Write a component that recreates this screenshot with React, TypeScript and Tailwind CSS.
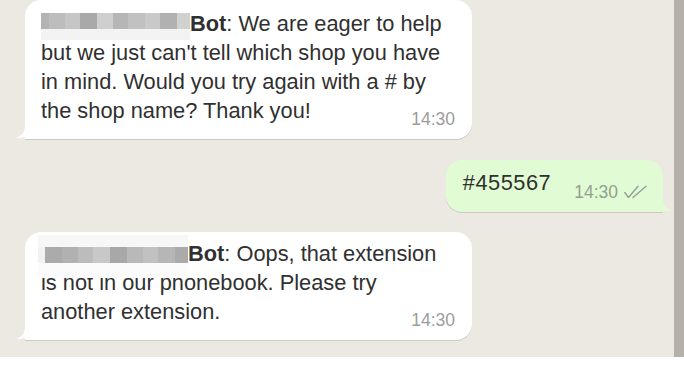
const tone1 = ["#b3b3b3", "#bdbdbd", "#c6c6c6", "#a9a9a9", "#cfcfcf", "#b6b6b6", "#c1c1c1", "#c9c9c9", "#b1b1b1", "#d1d1d1"];
const size1 = [8, 16, 15, 17, 16, 15, 17, 15, 17, 13];
const tone3 = ["#ababab", "#b1b1b1", "#bcbcbc", "#c8c8c8", "#a8a8a8", "#b9b9b9", "#c1c1c1", "#b6b6b6", "#aaaaaa"];
const size3 = [17, 16, 15, 17, 17, 16, 15, 17, 13];

function Stamp({ green }: { green?: boolean }) {
  return (
    <span className={`text-[17.5px] leading-[20px] ${green ? "text-[#93a08e]" : "text-[#9c9c9c]"}`}>
      14:30
    </span>
  );
}

function TailLeft() {
  return (
    <svg className="absolute left-[-9px] bottom-0 w-[12px] h-[14px]" viewBox="0 0 12 14">
      <path d="M9 0 C9 7 6 11 0 13 C3 13.4 6 13 8 12 C9 13 10.5 14 12 14 L12 0 Z" fill="#ffffff" />
    </svg>
  );
}

function TailRight() {
  return (
    <svg className="absolute right-[-9px] bottom-0 w-[12px] h-[14px]" viewBox="0 0 12 14">
      <path d="M3 0 C3 7 6 11 12 13 C9 13.4 6 13 4 12 C3 13 1.5 14 0 14 L0 0 Z" fill="#e1fcd5" />
    </svg>
  );
}

function Ticks() {
  return (
    <svg className="w-[23px] h-[14px] ml-[6px] mb-[3px]" viewBox="0 0 23 14" fill="none" stroke="#98a394" strokeWidth="1.5" strokeLinecap="round" strokeLinejoin="round">
      <path d="M0.8 7.5 L4.5 12.5 L14 1.2" />
      <path d="M9 12.5 L22 1.2" />
    </svg>
  );
}

export default function App() {
  return (
    <div className="w-[684px] h-[368px] bg-white flex flex-col font-['Liberation_Sans',Arial,sans-serif] overflow-hidden">
      <div className="h-[357px] flex">
        <div className="flex-1 bg-[#ece8e2] flex flex-col pl-[25px] pr-[11px]">
          {/* incoming 1 */}
          <div className="relative self-start w-[447px] bg-white rounded-[16px] rounded-bl-none pt-[8.5px] pl-4 pr-[17px] pb-[10px] shadow-[0_1px_0.5px_rgba(0,0,0,0.13)]">
            <TailLeft />
            <p className="text-[21.8px] leading-[29px] text-[#303030] whitespace-nowrap">
              <span className="relative inline-block w-[149px] h-[16px] align-[1.5px]">
                <span className="flex h-[16px]">
                  {tone1.map((c, i) => (
                    <span key={i} className="block h-full" style={{ width: size1[i], background: c }} />
                  ))}
                </span>
                <span className="absolute left-0 top-full w-full h-[11px] bg-[#f3f3f3]" />
              </span>
              <b>Bot</b>: We are eager to help
              <br />
              but we just can't tell which shop you have
              <br />
              in mind. Would you try again with a # by
              <br />
              the shop name? Thank you!
            </p>
            <div className="flex justify-end -mt-[15.5px]">
              <Stamp />
            </div>
          </div>

          {/* outgoing */}
          <div className="relative self-end mt-[21px] bg-[#e1fcd5] rounded-[16px] rounded-br-none pt-[7.5px] pl-[17px] pr-4 pb-[10px] flex items-end shadow-[0_1px_0.5px_rgba(0,0,0,0.13)]">
            <TailRight />
            <span className="text-[21.8px] leading-[29px] tracking-[0.5px] text-[#303030] mb-[5.5px]">#455567</span>
            <span className="ml-[23px] flex items-end">
              <Stamp green />
              <Ticks />
            </span>
          </div>

          {/* incoming 2 */}
          <div className="relative self-start mt-[20px] w-[447px] bg-white rounded-[16px] rounded-bl-none pt-[6.5px] pl-4 pr-[17px] pb-[10px] shadow-[0_1px_0.5px_rgba(0,0,0,0.13)]">
            <TailLeft />
            <p className="text-[21.8px] leading-[29px] text-[#303030] whitespace-nowrap">
              <span className="relative inline-block w-[150px] h-[16px] align-[-2.5px] -ml-[3px]">
                <span className="absolute left-0 -top-[12px] w-full h-[12px] bg-[#f7f7f7]" />
                <span className="flex h-[16px]">
                  <span className="block h-full w-[7px] bg-[#f2f2f2]" />
                  {tone3.map((c, i) => (
                    <span key={i} className="block h-full" style={{ width: size3[i], background: c }} />
                  ))}
                </span>
                <span className="absolute left-0 top-full w-full h-[14.5px] bg-[#fbfbfb]" />
              </span>
              <b>Bot</b>: Oops, that extension
              <br />
              is not in our phonebook. Please try
              <br />
              another extension.
            </p>
            <div className="flex justify-end -mt-[15.5px]">
              <Stamp />
            </div>
          </div>
        </div>
        <div className="w-[10px] bg-[#b5b0aa]" />
      </div>
    </div>
  );
}
